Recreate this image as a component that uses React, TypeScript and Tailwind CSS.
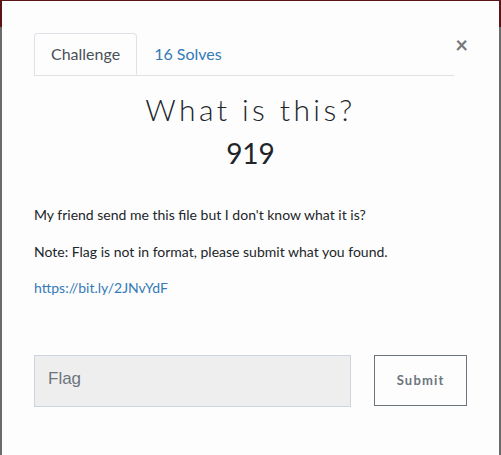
import React from "react";

export default function App() {
  return (
    <div className="relative w-[501px] h-[455px] overflow-hidden bg-[#6b6b6b]">
      <div className="h-[27px] bg-[#5b1516]" />
      <div
        className="absolute left-[2px] top-[1px] w-[497px] h-[460px] bg-[#fdfdfd] px-[32px] pt-[32px]"
        style={{ fontFamily: "Lato, 'Open Sans', sans-serif" }}
      >
        <div className="flex items-end justify-between">
          <div className="flex w-[420px] border-b border-[#dee2e6] text-[16px]">
            <div className="-mb-px h-[42px] px-[16px] flex items-center border border-[#dee2e6] border-b-[#fdfdfd] rounded-t-[4px] text-[#495057] bg-[#fdfdfd]">
              Challenge
            </div>
            <div className="h-[42px] px-[17px] flex items-center text-[#337ab7]">
              16 Solves
            </div>
          </div>
          <button className="mb-[20px] mr-[-1px] text-[#777] text-[22px] leading-none font-bold">
            ×
          </button>
        </div>

        <div className="text-center mt-[15px]">
          <div className="text-[30px] font-light tracking-[3.4px] text-[#212529] leading-[36px]">
            What is this?
          </div>
          <div className="text-[28px] font-normal text-[#212529] leading-[36px] mt-[8px]">
            919
          </div>
        </div>

        <div className="mt-[34px] text-[14px] text-[#212529] flex flex-col gap-[16.5px] leading-[20px]">
          <p>My friend send me this file but I don't know what it is?</p>
          <p>Note: Flag is not in format, please submit what you found.</p>
          <p>
            <a className="text-[#337ab7]">https://bit.ly/2JNvYdF</a>
          </p>
        </div>

        <div className="mt-[57px] flex items-start gap-[23px]">
          <input
            placeholder="Flag"
            className="w-[318px] h-[52px] bg-[#eeeeee] border border-[#ccd3db] px-[13px] pb-[5px] text-[17px] placeholder:text-[#6c757d] outline-none"
            style={{ fontFamily: "'Liberation Sans', Arial, sans-serif" }}
          />
          <button className="w-[93px] h-[51px] border border-[#6c757d] text-[#6c757d] text-[13px] font-bold tracking-[1.2px]">
            Submit
          </button>
        </div>
      </div>
    </div>
  );
}
